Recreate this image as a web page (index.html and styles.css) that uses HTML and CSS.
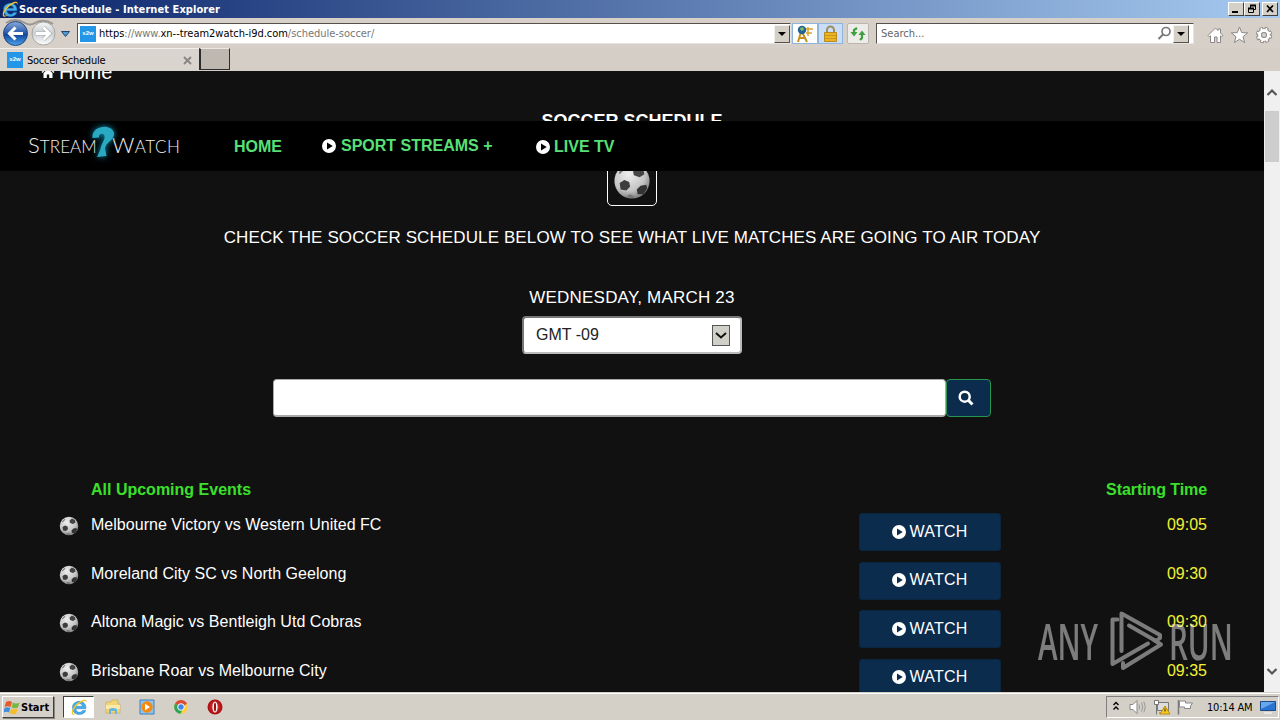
FILE: index.html
```html
<!DOCTYPE html>
<html lang="en">
<head>
<meta charset="utf-8">
<title>Soccer Schedule</title>
<link rel="stylesheet" href="styles.css">
</head>
<body>
<svg class="defs" width="0" height="0">
  <defs>
    <radialGradient id="ballg" cx=".4" cy=".3" r=".8"><stop offset="0" stop-color="#eee"/><stop offset=".6" stop-color="#c4c4c4"/><stop offset="1" stop-color="#666"/></radialGradient>
    <linearGradient id="backg" x1="0" y1="0" x2="0" y2="1"><stop offset="0" stop-color="#8ba9d8"/><stop offset=".45" stop-color="#2c5fb0"/><stop offset=".55" stop-color="#12469c"/><stop offset="1" stop-color="#4ba6ee"/></linearGradient>
    <linearGradient id="fwdg" x1="0" y1="0" x2="0" y2="1"><stop offset="0" stop-color="#f6f6f6"/><stop offset=".5" stop-color="#c9ced3"/><stop offset="1" stop-color="#fff"/></linearGradient>
    <radialGradient id="operag"><stop offset="0" stop-color="#e33"/><stop offset="1" stop-color="#a60d12"/></radialGradient>
  </defs>
  <symbol id="ball" viewBox="0 0 40 40">
    <circle cx="20" cy="20" r="18.500" fill="url(#ballg)"/>
    <path d="M7 22l5-3 5 2 1 5-4 4-6-1z" fill="#3d3d3d"/>
    <path d="M21 9l5-4 6 3 1 5-5 3-6-2z" fill="#444"/>
    <path d="M25 29l4-4 6-1 1 4-4 6-6 0z" fill="#333"/>
    <path d="M14 36l4-2 4 2 0 2-5 0zM6 11l5-5 2 1-6 6z" fill="#777"/>
  </symbol>
  <symbol id="play" viewBox="0 0 14 14">
    <path fill-rule="evenodd" fill="#fff" d="M7 0a7 7 0 1 0 0 14A7 7 0 0 0 7 0zM5 3.400L10.800 7 5 10.600z"/>
  </symbol>
  <symbol id="ie" viewBox="0 0 20 20">
    <path d="M17.700 12H6.500c.2 4.500 6 5 7.500 1.900h3.500c-2 6.500-14.800 6-14.800-3.200C2.700 1.500 18.500.8 17.700 12zM6.600 9.200h7.300c-.4-4-6.900-4-7.300 0z" fill="#45aeea" stroke="#1b74bd" stroke-width=".5"/>
    <path d="M3 18.500C-1 16 6 4.500 15 2c3.500-.8 4 1.200 2.800 3.700 .3-2-.5-2.800-2.500-2.200C8 6 2 14.500 3.500 17c1 1 3 .2 4.500-.8-2 2-4 3-5 2.300z" fill="#f2c52d"/>
  </symbol>
</svg>

<header class="titlebar">
  <svg class="title-icon" width="18" height="18"><use href="#ie"/></svg>
  <span class="title-text">Soccer Schedule - Internet Explorer</span>
  <div class="win-btns">
    <span class="wb"><svg width="14" height="12"><path d="M3 9h6" stroke="#000" stroke-width="2"/></svg></span><span class="wb"><svg width="14" height="12"><path d="M5.500 5V2.500h5v4H9" fill="none" stroke="#000"/><path d="M5 2.500h6M3 5.500h6" stroke="#000" stroke-width="2"/><path d="M3.500 5.500h5v4h-5z" fill="none" stroke="#000"/></svg></span><span class="wb wb-close"><svg width="14" height="12"><path d="M4 2.500l6 6.500M10 2.500l-6 6.500" stroke="#000" stroke-width="1.700"/></svg></span>
  </div>
</header>

<div class="navrow">
  <svg class="navbtns" width="77" height="30">
    <path d="M6 5Q15-1 25 5Q30 8 35 5Q44 0 53 6" fill="none" stroke="#9a958f" stroke-width="2"/>
    <circle cx="15.500" cy="15.500" r="12" fill="url(#backg)" stroke="#29477d"/>
    <path d="M23 15.500H10M15.500 9.500l-6 6 6 6" fill="none" stroke="#fff" stroke-width="3"/>
    <circle cx="43.500" cy="15.500" r="11.500" fill="url(#fwdg)" stroke="#a7a5a1"/>
    <path d="M36 15.500h13M43.500 9.500l6 6-6 6" fill="none" stroke="#aaa" stroke-width="4"/>
    <path d="M36 15.500h13M43.500 9.500l6 6-6 6" fill="none" stroke="#fff" stroke-width="2.800"/>
    <path d="M61.500 13.500h8l-4 5z" fill="#4d9ad6" stroke="#1d4673"/>
  </svg>
  <div class="field address">
    <span class="fav">s2w</span>
    <span class="url"><span class="dark">https</span>://www.<span class="dark">xn--tream2watch-i9d.com</span>/schedule-soccer/</span>
    <span class="drop"></span>
  </div>
  <span class="addr-btn compat"><svg width="24" height="20"><path d="M8 8L5 18M9 8l5 10M7 14h5" stroke="#c4921c" stroke-width="2"/><path d="M12 5h8M13 9h6M15 3v9" stroke="#d9a32e" stroke-width="1.500"/><circle cx="9" cy="6" r="4.200" fill="#256394"/><path d="M7 4l3-1 1 3-3 1z" fill="#7cc06a"/></svg></span>
  <span class="addr-btn lock"><svg width="24" height="20"><path d="M8 9V6a3.500 3.500 0 0 1 7 0v3" fill="none" stroke="#9d8f5d" stroke-width="2"/><path d="M5.500 8.500h12v9h-12z" fill="#eeb41f" stroke="#b98a20"/><path d="M6 11.500h11M6 14.500h11" stroke="#c9961c"/></svg></span>
  <span class="addr-btn refresh"><svg width="20" height="20"><path d="M9 4L6 6v4" fill="none" stroke="#3fa03f" stroke-width="2.200"/><path d="M2.500 8h7L6 12.500z" fill="#3fa03f"/><path d="M12 16l2-2v-4" fill="none" stroke="#3fa03f" stroke-width="2.200"/><path d="M10.500 11h7L14 6.500z" fill="#3fa03f"/></svg></span>
  <div class="field searchbox">
    <span class="ph">Search...</span>
    <svg class="glass" width="15" height="15"><circle cx="9" cy="5.500" r="4" fill="none" stroke="#777" stroke-width="1.700"/><path d="M6 8.500L1.500 13" stroke="#777" stroke-width="2"/></svg>
    <span class="drop"></span>
  </div>
  <svg class="tools" width="72" height="22">
    <g fill="#fff" stroke="#8b8885" stroke-width="1">
      <path d="M2 11.500L9.500 4l2.500 2.500V5h2.500v4l2.500 2.500-1.500 1.200-1-.9V18.500h-3.500V13H8.500v5.500H4.500v-6.700l-1.300 1z"/>
      <path d="M33.500 3l2.200 5.600 6 .3-4.700 3.800 1.600 5.800-5.100-3.200-5.100 3.200 1.600-5.800-4.700-3.800 6-.3z"/>
    </g>
    <g fill="none">
      <circle cx="58" cy="11" r="6.200" stroke="#8b8885" stroke-width="4" stroke-dasharray="3.200 1.670"/>
      <circle cx="58" cy="11" r="4.700" stroke="#8b8885" stroke-width="4.200"/>
      <circle cx="58" cy="11" r="6.200" stroke="#fff" stroke-width="2.400" stroke-dasharray="1.700 3.170" stroke-dashoffset="-.75"/>
      <circle cx="58" cy="11" r="4.500" stroke="#fff" stroke-width="2.800"/>
      <circle cx="58" cy="11" r="2.500" stroke="#8b8885" stroke-width=".8"/>
    </g>
  </svg>
</div>

<div class="tabrow">
  <div class="tab"><span class="fav">s2w</span><span class="tab-text">Soccer Schedule</span><svg class="tab-x" width="9" height="9"><path d="M1 1l7 7M8 1L1 8" stroke="#8a8580" stroke-width="1.900"/></svg></div>
  <div class="newtab"></div>
</div>

<main class="page">
  <div class="site">
    <div class="crumb"><svg width="14" height="14" viewBox="0 0 14 14"><path d="M7 1l6.500 6-.8 1L7 2.800 1.300 8l-.8-1zM10.500 2H12v4l-1.500-1.500zM2.500 8L7 4l4.500 4v5H8.200V9.500H5.800V13H2.500z" fill="#fff"/></svg><span>Home</span></div>
    <h1 class="heading">SOCCER SCHEDULE</h1>
    <div class="ballbox"><svg width="38" height="38"><use href="#ball"/></svg></div>
    <p class="intro">CHECK THE SOCCER SCHEDULE BELOW TO SEE WHAT LIVE MATCHES ARE GOING TO AIR TODAY</p>
    <p class="date">WEDNESDAY, MARCH 23</p>
    <div class="select"><span>GMT -09</span><span class="select-btn"><svg width="16" height="19"><path d="M3 7l5 4.500L13 7" fill="none" stroke="#111" stroke-width="2"/></svg></span></div>
    <div class="finder">
      <div class="finder-input"></div>
      <div class="finder-btn"><svg width="16" height="16"><circle cx="6.700" cy="6.700" r="5" fill="none" stroke="#fff" stroke-width="2.500"/><path d="M10.300 10.300L14.500 14.500" stroke="#fff" stroke-width="3"/></svg></div>
    </div>
    <div class="events">
      <div class="thead"><span>All Upcoming Events</span><span class="th-time">Starting Time</span></div>
      <div class="row"><svg class="rb" width="20" height="20"><use href="#ball"/></svg><span class="name">Melbourne Victory vs Western United FC</span><span class="watch"><svg width="14" height="14"><use href="#play"/></svg><span>WATCH</span></span><span class="time">09:05</span></div>
      <div class="row"><svg class="rb" width="20" height="20"><use href="#ball"/></svg><span class="name">Moreland City SC vs North Geelong</span><span class="watch"><svg width="14" height="14"><use href="#play"/></svg><span>WATCH</span></span><span class="time">09:30</span></div>
      <div class="row"><svg class="rb" width="20" height="20"><use href="#ball"/></svg><span class="name">Altona Magic vs Bentleigh Utd Cobras</span><span class="watch"><svg width="14" height="14"><use href="#play"/></svg><span>WATCH</span></span><span class="time">09:30</span></div>
      <div class="row"><svg class="rb" width="20" height="20"><use href="#ball"/></svg><span class="name">Brisbane Roar vs Melbourne City</span><span class="watch"><svg width="14" height="14"><use href="#play"/></svg><span>WATCH</span></span><span class="time">09:35</span></div>
    </div>
    <nav class="sitenav">
      <div class="logo">
        <span class="lw l1">S<small>TREAM</small></span>
        <svg class="q" width="30" height="42" viewBox="0 0 30 42"><path d="M4.500 17C3 4 24 2 26 12c.8 5-4 8-7.500 11.500L17 27 18.500 35 9 36 12.500 28c.5-6 5-9 4-13-1-3.500-6-2.500-5.500 1.500z" fill="#2aa9c2"/></svg>
        <span class="lw l2">W<small>ATCH</small></span>
      </div>
      <span class="link home">HOME</span>
      <span class="link streams"><svg width="14" height="14"><use href="#play"/></svg><span>SPORT STREAMS +</span></span>
      <span class="link live"><svg width="14" height="14"><use href="#play"/></svg><span>LIVE TV</span></span>
    </nav>
    <div class="mark">
      <span class="mk">ANY</span>
      <svg width="60" height="64" fill="none" stroke="#fff" stroke-width="4" stroke-linejoin="round" stroke-linecap="round"><path d="M12.500 42V4.500L51 26V29L47 32L20 16.500"/><path d="M8.500 10.500H3.500V55L39 34.500"/><path d="M14 54V59L52 35.500L45 31"/></svg>
      <span class="mk">RUN</span>
    </div>
  </div>
  <div class="scroll">
    <svg width="16" height="16"><path d="M3.500 10L8 5.500 12.500 10" fill="none" stroke="#555" stroke-width="2.200"/></svg>
    <div class="thumb"></div>
    <svg class="down" width="16" height="16"><path d="M3.500 6L8 10.500 12.500 6" fill="none" stroke="#555" stroke-width="2.200"/></svg>
  </div>
</main>

<footer class="taskbar">
  <div class="start"><svg width="17" height="16"><path d="M2 3q3-2 6 0l-1.500 5q-3-1.500-6 0z" fill="#e8592c"/><path d="M9 3.500q3 2 6.500 0L14 8.500q-3 1.500-6.500 0z" fill="#77b843"/><path d="M.5 9q3-1.500 5.800 0L5 13.500q-2.500-1.500-5.500 0z" fill="#3f8edb"/><path d="M7.200 9.500q3 1.500 6.500 0l-1.500 5q-3 1.500-6.500-.3z" fill="#f4bd2c"/></svg><span>Start</span></div>
  <div class="task-ie"><svg width="18" height="18"><use href="#ie"/></svg></div>
  <svg class="ti" width="18" height="18"><path d="M2 4h5l1-2h6v4h2v9H2z" fill="#f2d675" stroke="#c8a64b" stroke-width=".6"/><path d="M2 7h14v4H2z" fill="#f8e9a9"/><path d="M5 16v-5q4-2 8 0v5h-2v-3H7v3z" fill="#67b5df"/></svg>
  <svg class="ti" width="18" height="18"><path d="M2 2h14v14H2z" fill="#8fc4ee" stroke="#3c7fb9"/><circle cx="9" cy="9" r="5.700" fill="#f48a14"/><path d="M7 5.800L12 9l-5 3.200z" fill="#fff"/></svg>
  <svg class="ti" width="18" height="18"><circle cx="9" cy="9" r="6.800" fill="#ffcf3a"/><path d="M9 9L3 5.700A6.800 6.800 0 0 1 15 5.700z" fill="#dc4a38"/><path d="M9 9L3 5.700A6.800 6.800 0 0 0 8.500 15.800L11.500 10z" fill="#2fa556"/><circle cx="9" cy="9" r="3.300" fill="#3f86e8" stroke="#fff"/></svg>
  <svg class="ti" width="18" height="18"><ellipse cx="9" cy="9" rx="7.500" ry="7.500" fill="url(#operag)"/><ellipse cx="9" cy="9" rx="2.600" ry="5.500" fill="#fff"/><ellipse cx="9" cy="9" rx="1.100" ry="4.500" fill="#9a1014"/></svg>
  <div class="tray">
    <svg width="94" height="20">
      <path d="M6.500 8l2.500-2.500L11.500 8M6.500 12.500L9 10l2.500 2.500" fill="none" stroke="#000" stroke-width="1.400"/>
      <path d="M23 7.500h3l4-4v13l-4-4h-3z" fill="#fff" stroke="#888"/><path d="M32 7.500q1.500 2.500 0 5M34.500 5.500q2.500 4.500 0 9M36.800 4.500q3 5.500 0 11" fill="none" stroke="#999"/>
      <path d="M50.500 5.500h11v8h-11z" fill="#ddd" stroke="#777"/><path d="M52 16h6M47.500 3.500h4v4h-4zM49.500 7.500v10" fill="#fff" stroke="#777"/><path d="M57 9l5 8H52z" fill="#f7c81e" stroke="#b98b0b" transform="translate(1)"/><path d="M58 11.500v3" stroke="#222"/>
      <path d="M71.500 3v14.500" stroke="#777" stroke-width="1.500"/><path d="M72.500 4h6v2h7l-2 3 0 2.500h-6V10h-5z" fill="#fff" stroke="#888"/>
    </svg>
    <span class="clock">10:14 AM</span>
    <svg width="18" height="16"><path d="M1.500 2.500h15v9h-15z" fill="#2a74cf" stroke="#1b4b8d"/><path d="M2 3h14L2 10z" fill="#67a7ec"/><path d="M5 14h8" stroke="#eee" stroke-width="1.500"/></svg>
  </div>
</footer>
</body>
</html>
```
FILE: styles.css
```css
* { box-sizing: border-box; }
body { margin: 0; width: 1280px; height: 720px; overflow: hidden; display: flex; flex-direction: column; background: #d4d0c8; font-family: "DejaVu Sans Condensed", "DejaVu Sans", sans-serif; font-stretch: condensed; font-size: 11px; color: #000; }
svg { display: block; flex: none; }
span { white-space: nowrap; }
.defs { position: absolute; }

.titlebar { height: 18px; flex: none; display: flex; align-items: center; background: linear-gradient(90deg, #0a246a, #a6caf0); padding: 0 2px 0 1px; }
.title-text { color: #fff; font-weight: bold; font-size: 11px; letter-spacing: .07px; }
.win-btns { margin-left: auto; display: flex; }
.wb { width: 16px; height: 14px; background: #d4d0c8; border: 1px solid; border-color: #fff #404040 #404040 #fff; }
.wb-close { margin-left: 2px; }

.navrow { height: 30px; flex: none; display: flex; align-items: flex-start; background: #d6d0c9; }
.field { background: #fff; border: 1px solid; border-color: #55504b #e8e5e0 #e8e5e0 #55504b; height: 21px; margin-top: 5px; display: flex; align-items: center; }
.address { width: 714px; padding-left: 2px; }
.fav { width: 16px; height: 16px; background: #2496e8; color: #fff; font: bold 6px/15px "Liberation Sans", sans-serif; text-align: center; flex: none; }
.url { margin-left: 3px; color: #777; font-size: 11px; letter-spacing: -.03px; }
.dark { color: #000; }
.drop { width: 16px; height: 18px; margin-left: auto; background: #d4d0c8; border: 1px solid; border-color: #f4f2ee #55504b #55504b #f4f2ee; display: flex; align-items: center; justify-content: center; }
.drop::before { content: ""; border: 4px solid transparent; border-top-color: #000; border-bottom: 0; }
.addr-btn { height: 21px; margin-top: 5px; width: 26px; border: 1px solid #8fb5dd; background: #fff; }
.compat { margin-left: 1px; }
.lock { width: 25px; background: #c9ddf6; }
.refresh { width: 22px; margin-left: 4px; border-color: #bbb7b0; background: #eeece8; border-radius: 2px; }
.searchbox { width: 318px; margin-left: 7px; padding-right: 4px; }
.ph { margin-left: 4px; color: #666; font-size: 11px; }
.glass { margin-left: auto; margin-right: 1px; }
.searchbox .drop { margin-left: 0; }
.tools { margin: 6px 0 0 12px; }

.tabrow { height: 23px; flex: none; display: flex; background: #d4cec7; }
.tab { width: 199px; height: 23px; display: flex; align-items: center; padding-left: 7px; background: #d9d4cd; border-top: 1px solid #f2efeb; }
.tab-text { margin-left: 4px; font-size: 11px; letter-spacing: -.25px; }
.tab-x { margin-left: auto; margin-right: 7px; }
.newtab { width: 31px; height: 22px; background: #bfb8b1; border: solid; border-width: 1px 1px 1px 2px; border-color: #eae6e1 #2c2c2c #2c2c2c #2c2c2c; }

.page { flex: 1; min-height: 0; display: flex; background: #111; color: #fff; font: 16px/20px "Liberation Sans", Arial, sans-serif; position: relative; }
.site { width: 1264px; height: 621px; overflow: hidden; display: flex; flex-direction: column; align-items: center; position: relative; }
.crumb { align-self: flex-start; margin: -10px 0 0 41px; height: 22px; font-size: 20px; line-height: 22px; display: flex; align-items: center; gap: 4px; flex: none; }
.heading { margin: 28px 0 0; font-size: 18px; line-height: 20px; font-weight: bold; }
.ballbox { width: 50px; height: 50px; margin-top: 25px; border: 1px solid #fff; border-radius: 5px; display: flex; align-items: center; justify-content: center; flex: none; }
.intro { margin: 22px 0 0; font-size: 17px; letter-spacing: .11px; white-space: nowrap; }
.date { margin: 40px 0 0; font-size: 17px; letter-spacing: .2px; }
.select { margin-top: 8px; width: 220px; height: 38px; flex: none; border: 2px solid; border-color: #777 #bbb #bbb #777; border-radius: 4px; background: #fff; color: #222; display: flex; align-items: center; justify-content: space-between; padding: 0 10px 0 12px; }
.select-btn { width: 18px; height: 21px; background: #d0d0c8; border: 1px solid #555; }
.finder { display: flex; width: 718px; height: 38px; flex: none; margin-top: 25px; }
.finder-input { width: 673px; background: #fff; border: 1px solid #aaa; border-bottom-width: 2px; border-radius: 4px; }
.finder-btn { width: 45px; background: #0c2c4e; border: 1px solid #27964e; border-radius: 4px; padding: 10px 0 0 11px; }
.events { width: 1149px; margin: 63px 0 0 1px; flex: none; }
.thead { height: 35px; padding-left: 33px; display: flex; justify-content: space-between; color: #3be02b; font-weight: bold; }
.th-time { letter-spacing: -.08px; }
.row { height: 48.500px; display: flex; align-items: flex-start; }
.rb { margin: 1px 12px 0 1px; }
.name { width: 768px; letter-spacing: .03px; }
.watch { width: 142px; height: 38px; margin-top: -2px; background: #0c2c4e; border: 1px solid #0a2540; border-radius: 3px; display: flex; align-items: center; justify-content: center; gap: 4px; padding: 0 1px 1px 0; letter-spacing: .2px; }
.time { margin-left: auto; color: #f2f233; }

.sitenav { position: absolute; left: 0; top: 50px; width: 1264px; height: 50px; background: #000; display: flex; align-items: center; }
.logo { display: flex; align-items: center; width: 234px; padding-left: 28px; color: #eee; flex: none; }
.lw { font: 300 22px/24px Lato, "Open Sans", sans-serif; display: block; }
.lw small { font-size: 17px; letter-spacing: .1px; }
.l1 { width: 65px; }
.l2 { margin-left: -6px; letter-spacing: .3px; }
.l2 small { letter-spacing: .6px; }
.q { margin-left: -5px; margin-top: -8px; filter: drop-shadow(0 0 3px #0a8fb5); }
.link { color: #58e077; font-weight: bold; display: flex; align-items: center; gap: 4px; }
.home { width: 88px; margin-top: 1px; }
.streams { width: 214px; gap: 5px; margin-top: -1px; }
.live { margin-top: 1px; }
.mark { position: absolute; left: 1038px; top: 538px; width: 200px; height: 64px; display: flex; align-items: center; opacity: .45; }
.mk { font: 600 50px/60px "Open Sans", sans-serif; color: #fff; width: 71px; transform: scaleX(.59); transform-origin: 0 50%; }
.scroll { width: 16px; background: #f0f0f0; display: flex; flex-direction: column; padding-top: 14px; }
.thumb { height: 51px; background: #cdcdcd; margin: 10px 1px 0 1px; }
.down { margin: auto 0 13px; }

.taskbar { height: 28px; flex: none; border-top: 1px solid #d4d0c8; box-shadow: inset 0 1px #fff; background: #d4d0c8; display: flex; align-items: center; padding: 1px 1px 0 2px; }
.start { width: 52px; height: 22px; border: 1px solid; border-color: #fff #404040 #404040 #fff; box-shadow: 1px 1px #888; display: flex; align-items: center; padding-left: 1px; font-weight: bold; font-size: 11px; }
.task-ie { width: 31px; height: 22px; margin: 0 10px 0 9px; background: #fff; border: 1px solid; border-color: #404040 #fff #fff #404040; display: flex; align-items: center; justify-content: center; }
.ti { margin-right: 16px; }
.tray { margin-left: auto; width: 173px; height: 22px; border: 1px solid; border-color: #808080 #fff #fff #808080; display: flex; align-items: center; }
.clock { margin-left: 6px; width: 52px; font-size: 11px; letter-spacing: -.2px; }
```
